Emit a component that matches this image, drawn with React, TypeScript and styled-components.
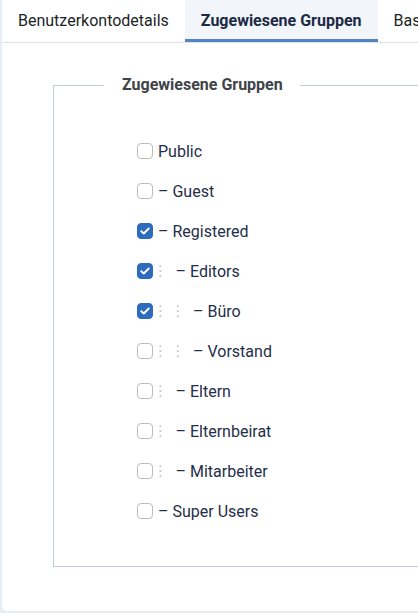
import React from "react";
import styled, { createGlobalStyle } from "styled-components";

const Global = createGlobalStyle`
  html, body { margin: 0; padding: 0; }
  body {
    background: #e9eef5;
    font-family: Roboto, "Liberation Sans", Arial, sans-serif;
    overflow: hidden;
  }
`;

const Page = styled.div`
  padding-left: 2px;
  height: 613px;
  box-sizing: border-box;
`;

const Card = styled.div`
  background: #ffffff;
  height: 611px;
  border-radius: 0 0 0 5px;
  display: flex;
  flex-direction: column;
  overflow: hidden;
`;

const TabBar = styled.div`
  display: flex;
  height: 43px;
  border-bottom: 1px solid #dce3ec;
  box-sizing: border-box;
  flex-shrink: 0;
`;

const Tab = styled.div<{ $active?: boolean }>`
  padding: 0 16px;
  display: flex;
  align-items: center;
  font-size: 16px;
  white-space: nowrap;
  color: ${(p) => (p.$active ? "#1c2a45" : "#1b1f26")};
  font-weight: ${(p) => (p.$active ? 700 : 400)};
  background: ${(p) => (p.$active ? "#f2f5f9" : "transparent")};
  border-bottom: 3px solid ${(p) => (p.$active ? "#5583c2" : "transparent")};
  box-sizing: border-box;
  padding-top: 1px;
`;

const Fieldset = styled.fieldset`
  margin: 32px 0 0 51px;
  border: 1px solid #bccbe0;
  border-right: none;
  padding: 36px 0 35px 0;
  min-width: 0;
`;

const Legend = styled.legend`
  margin-left: 50px;
  padding: 0 17px 0 18px;
  font-size: 16px;
  font-weight: 700;
  color: #404348;
  line-height: 20px;
`;

const List = styled.div`
  display: flex;
  flex-direction: column;
  padding-left: 83px;
`;

const Row = styled.label`
  display: flex;
  align-items: center;
  height: 40px;
  font-size: 16px;
  color: #1f2e4a;
`;

const Box = styled.span<{ $checked?: boolean }>`
  width: 16px;
  height: 16px;
  box-sizing: border-box;
  border-radius: 4px;
  border: 1px solid ${(p) => (p.$checked ? "#2d6bbd" : "#bdbdbd")};
  background: ${(p) => (p.$checked ? "#2d6bbd" : "#fff")};
  display: inline-flex;
  align-items: center;
  justify-content: center;
  margin-right: 5px;
  flex-shrink: 0;
`;

const Indent = styled.span`
  display: inline-block;
  width: 17.5px;
  color: #c2c5ca;
  font-family: "DejaVu Sans", sans-serif;
  font-size: 15px;
  text-indent: -5px;
  overflow: visible;
  white-space: nowrap;
`;

const Label = styled.span`
  white-space: nowrap;
`;

type Item = { name: string; level: number; checked?: boolean };

const items: Item[] = [
  { name: "Public", level: -1 },
  { name: "Guest", level: 0 },
  { name: "Registered", level: 0, checked: true },
  { name: "Editors", level: 1, checked: true },
  { name: "Büro", level: 2, checked: true },
  { name: "Vorstand", level: 2 },
  { name: "Eltern", level: 1 },
  { name: "Elternbeirat", level: 1 },
  { name: "Mitarbeiter", level: 1 },
  { name: "Super Users", level: 0 },
];

const Check = () => (
  <svg width="10" height="8" viewBox="0 0 10 8">
    <path d="M1.3 4.2 L3.8 6.5 L8.7 1.5" fill="none" stroke="#fff" strokeWidth="1.9" strokeLinecap="round" strokeLinejoin="round" />
  </svg>
);

export default function App() {
  return (
    <>
      <Global />
      <Page>
        <Card>
          <TabBar>
            <Tab>Benutzerkontodetails</Tab>
            <Tab $active>Zugewiesene Gruppen</Tab>
            <Tab>Basiseinstellungen</Tab>
          </TabBar>
          <Fieldset>
            <Legend>Zugewiesene Gruppen</Legend>
            <List>
              {items.map((it) => (
                <Row key={it.name}>
                  <Box $checked={it.checked}>{it.checked && <Check />}</Box>
                  {Array.from({ length: Math.max(it.level, 0) }).map((_, i) => (
                    <Indent key={i}>⋮</Indent>
                  ))}
                  <Label>{it.level >= 0 ? `– ${it.name}` : it.name}</Label>
                </Row>
              ))}
            </List>
          </Fieldset>
        </Card>
      </Page>
    </>
  );
}
